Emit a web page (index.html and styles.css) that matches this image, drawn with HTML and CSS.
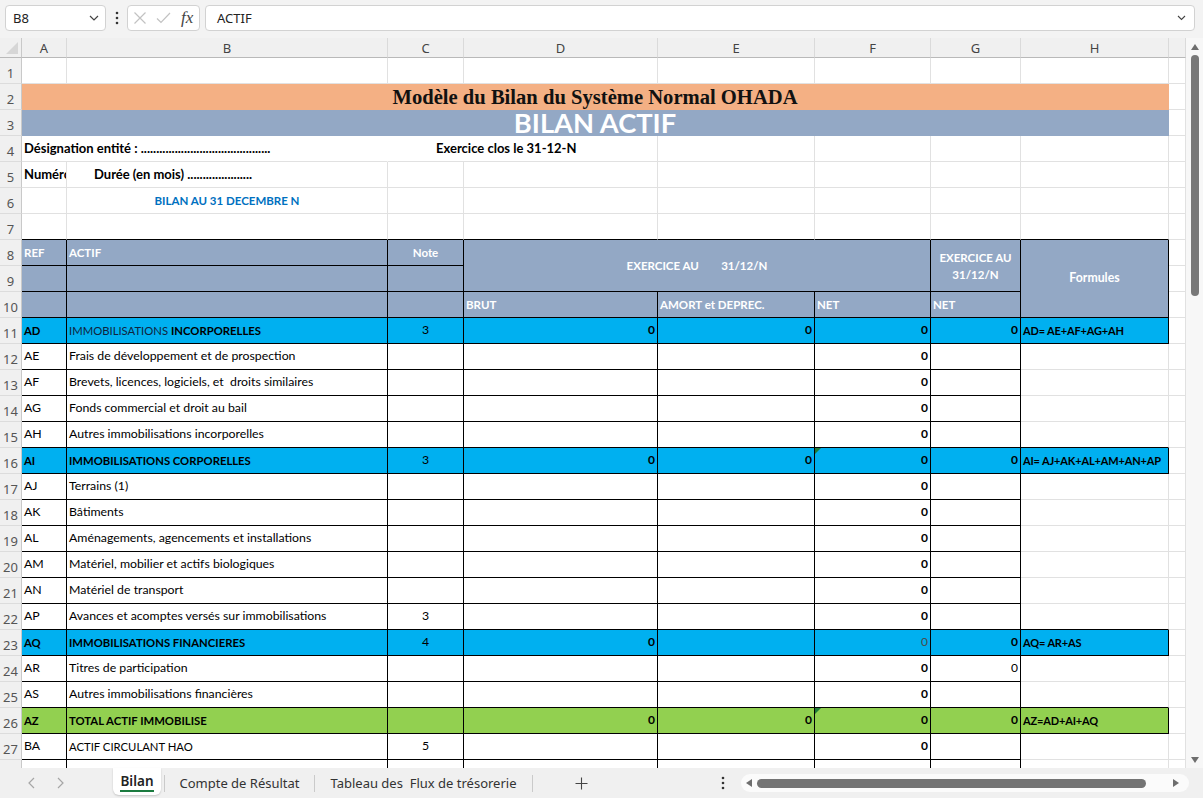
FILE: index.html
```html
<!DOCTYPE html>
<html lang="fr">
<head>
<meta charset="utf-8">
<title>Bilan</title>
<link rel="stylesheet" href="styles.css">
</head>
<body>
<div class="app">
  <div class="topbar">
    <div class="namebox"><span>B8</span><svg width="10" height="6" viewBox="0 0 10 6"><path d="M1 1 L5 5 L9 1" fill="none" stroke="#444" stroke-width="1.2"/></svg></div>
    <div class="vdots"><svg width="4" height="14" viewBox="0 0 4 14"><circle cx="2" cy="2" r="1.3" fill="#333"/><circle cx="2" cy="7" r="1.3" fill="#333"/><circle cx="2" cy="12" r="1.3" fill="#333"/></svg></div>
    <div class="fxbox">
      <svg width="14" height="14" viewBox="0 0 14 14"><path d="M1.5 1.5 L12.5 12.5 M12.5 1.5 L1.5 12.5" stroke="#c2c2c2" stroke-width="1.2" fill="none"/></svg>
      <svg width="15" height="14" viewBox="0 0 15 14"><path d="M1 7.5 L5 11.5 L14 2" stroke="#c2c2c2" stroke-width="1.2" fill="none"/></svg>
      <span class="fx">fx</span>
    </div>
    <div class="formula"><span>ACTIF</span><svg width="9" height="6" viewBox="0 0 9 6"><path d="M1 1 L4.5 4.5 L8 1" fill="none" stroke="#444" stroke-width="1.1"/></svg></div>
  </div>

  <div class="main">
    <div class="sheet">
      <div class="grid">
        <div class="corner"><svg width="22" height="20" viewBox="0 0 22 20"><polygon points="18,4 18,16 6,16" fill="#d6d6d6"/></svg></div>
        <div class="ch">A</div><div class="ch">B</div><div class="ch">C</div><div class="ch">D</div><div class="ch">E</div><div class="ch">F</div><div class="ch">G</div><div class="ch">H</div><div class="ch"></div>

        <div class="rh">1</div>
        <div class="c"></div><div class="c"></div><div class="c"></div><div class="c"></div><div class="c"></div><div class="c"></div><div class="c"></div><div class="c"></div><div class="c"></div>

        <div class="rh">2</div>
        <div class="c title span8">Modèle du Bilan du Système Normal OHADA</div>
        <div class="c"></div>

        <div class="rh">3</div>
        <div class="c big span8">BILAN ACTIF</div>
        <div class="c"></div>

        <div class="rh">4</div>
        <div class="c bo lg span2 nr">Désignation entité : ..........................................</div>
        <div class="c bo lg span2 ex">Exercice clos le 31-12-N</div>
        <div class="c"></div><div class="c"></div><div class="c"></div><div class="c"></div><div class="c"></div>

        <div class="rh">5</div>
        <div class="c bo lg">Numéro</div>
        <div class="c bo lg dur">Durée (en mois) .....................</div>
        <div class="c"></div><div class="c"></div><div class="c"></div><div class="c"></div><div class="c"></div><div class="c"></div><div class="c"></div>

        <div class="rh">6</div>
        <div class="c"></div>
        <div class="c bo m blue">BILAN AU 31 DECEMBRE N</div>
        <div class="c"></div><div class="c"></div><div class="c"></div><div class="c"></div><div class="c"></div><div class="c"></div><div class="c"></div>

        <div class="rh">7</div>
        <div class="c bb"></div><div class="c bb"></div><div class="c bb"></div><div class="c bb"></div><div class="c bb"></div><div class="c bb"></div><div class="c bb"></div><div class="c bb"></div><div class="c"></div>

        <div class="rh">8</div>
        <div class="c hd b">REF</div>
        <div class="c hd b">ACTIF</div>
        <div class="c hd b m">Note</div>
        <div class="c hd b m ex8">EXERCICE AU        31/12/N</div>
        <div class="c hd b m ex9">EXERCICE AU<br>31/12/N</div>
        <div class="c hd b m fo">Formules</div>
        <div class="c"></div>

        <div class="rh">9</div>
        <div class="c hd b"></div><div class="c hd b"></div><div class="c hd b"></div>
        <div class="c"></div>

        <div class="rh">10</div>
        <div class="c hd b"></div><div class="c hd b"></div><div class="c hd b"></div>
        <div class="c hd b">BRUT</div>
        <div class="c hd b">AMORT et DEPREC.</div>
        <div class="c hd b">NET</div>
        <div class="c hd b">NET</div>
        <div class="c"></div>

        <div class="rh">11</div>
        <div class="c b cy bo up">AD</div>
        <div class="c b cy up"><span class="nv">IMMOBILISATIONS&nbsp;</span><b>INCORPORELLES</b></div>
        <div class="c b cy m">3</div>
        <div class="c b cy r bo">0</div>
        <div class="c b cy r bo">0</div>
        <div class="c b cy r bo">0</div>
        <div class="c b cy r bo">0</div>
        <div class="c b cy bo fm">AD= AE+AF+AG+AH</div>
        <div class="c"></div>

        <div class="rh">12</div>
        <div class="c b">AE</div>
        <div class="c b">Frais de développement et de prospection</div>
        <div class="c b"></div><div class="c b"></div><div class="c b"></div>
        <div class="c b r bo">0</div>
        <div class="c b"></div><div class="c"></div><div class="c"></div>

        <div class="rh">13</div>
        <div class="c b">AF</div>
        <div class="c b">Brevets, licences, logiciels, et&nbsp; droits similaires</div>
        <div class="c b"></div><div class="c b"></div><div class="c b"></div>
        <div class="c b r bo">0</div>
        <div class="c b"></div><div class="c"></div><div class="c"></div>

        <div class="rh">14</div>
        <div class="c b">AG</div>
        <div class="c b">Fonds commercial et droit au bail</div>
        <div class="c b"></div><div class="c b"></div><div class="c b"></div>
        <div class="c b r bo">0</div>
        <div class="c b"></div><div class="c"></div><div class="c"></div>

        <div class="rh">15</div>
        <div class="c b">AH</div>
        <div class="c b">Autres immobilisations incorporelles</div>
        <div class="c b"></div><div class="c b"></div><div class="c b"></div>
        <div class="c b r bo">0</div>
        <div class="c b"></div><div class="c bb"></div><div class="c"></div>

        <div class="rh">16</div>
        <div class="c b cy bo up">AI</div>
        <div class="c b cy bo up">IMMOBILISATIONS CORPORELLES</div>
        <div class="c b cy m">3</div>
        <div class="c b cy r bo">0</div>
        <div class="c b cy r bo">0</div>
        <div class="c b cy r bo tri">0</div>
        <div class="c b cy r bo">0</div>
        <div class="c b cy bo fm">AI= AJ+AK+AL+AM+AN+AP</div>
        <div class="c"></div>

        <div class="rh">17</div>
        <div class="c b">AJ</div>
        <div class="c b">Terrains (1)</div>
        <div class="c b"></div><div class="c b"></div><div class="c b"></div>
        <div class="c b r bo">0</div>
        <div class="c b"></div><div class="c"></div><div class="c"></div>

        <div class="rh">18</div>
        <div class="c b">AK</div>
        <div class="c b">Bâtiments</div>
        <div class="c b"></div><div class="c b"></div><div class="c b"></div>
        <div class="c b r bo">0</div>
        <div class="c b"></div><div class="c"></div><div class="c"></div>

        <div class="rh">19</div>
        <div class="c b">AL</div>
        <div class="c b">Aménagements, agencements et installations</div>
        <div class="c b"></div><div class="c b"></div><div class="c b"></div>
        <div class="c b r bo">0</div>
        <div class="c b"></div><div class="c"></div><div class="c"></div>

        <div class="rh">20</div>
        <div class="c b">AM</div>
        <div class="c b">Matériel, mobilier et actifs biologiques</div>
        <div class="c b"></div><div class="c b"></div><div class="c b"></div>
        <div class="c b r bo">0</div>
        <div class="c b"></div><div class="c"></div><div class="c"></div>

        <div class="rh">21</div>
        <div class="c b">AN</div>
        <div class="c b">Matériel de transport</div>
        <div class="c b"></div><div class="c b"></div><div class="c b"></div>
        <div class="c b r bo">0</div>
        <div class="c b"></div><div class="c"></div><div class="c"></div>

        <div class="rh">22</div>
        <div class="c b">AP</div>
        <div class="c b">Avances et acomptes versés sur immobilisations</div>
        <div class="c b m">3</div><div class="c b"></div><div class="c b"></div>
        <div class="c b r bo">0</div>
        <div class="c b"></div><div class="c bb"></div><div class="c"></div>

        <div class="rh">23</div>
        <div class="c b cy bo up">AQ</div>
        <div class="c b cy bo up">IMMOBILISATIONS FINANCIERES</div>
        <div class="c b cy m">4</div>
        <div class="c b cy r bo">0</div>
        <div class="c b cy"></div>
        <div class="c b cy r dim">0</div>
        <div class="c b cy r bo">0</div>
        <div class="c b cy bo fm">AQ= AR+AS</div>
        <div class="c"></div>

        <div class="rh">24</div>
        <div class="c b">AR</div>
        <div class="c b">Titres de participation</div>
        <div class="c b"></div><div class="c b"></div><div class="c b"></div>
        <div class="c b r bo">0</div>
        <div class="c b r">0</div><div class="c"></div><div class="c"></div>

        <div class="rh">25</div>
        <div class="c b">AS</div>
        <div class="c b">Autres immobilisations financières</div>
        <div class="c b"></div><div class="c b"></div><div class="c b"></div>
        <div class="c b r bo">0</div>
        <div class="c b"></div><div class="c bb"></div><div class="c"></div>

        <div class="rh">26</div>
        <div class="c b gr bo up">AZ</div>
        <div class="c b gr bo up">TOTAL ACTIF IMMOBILISE</div>
        <div class="c b gr"></div>
        <div class="c b gr r bo">0</div>
        <div class="c b gr r bo">0</div>
        <div class="c b gr r bo tri">0</div>
        <div class="c b gr r bo">0</div>
        <div class="c b gr bo fm">AZ=AD+AI+AQ</div>
        <div class="c"></div>

        <div class="rh">27</div>
        <div class="c b">BA</div>
        <div class="c b up">ACTIF CIRCULANT HAO</div>
        <div class="c b m">5</div><div class="c b"></div><div class="c b"></div>
        <div class="c b r bo">0</div>
        <div class="c b"></div><div class="c"></div><div class="c"></div>

        <div class="rh">28</div>
        <div class="c b"></div><div class="c b"></div><div class="c b"></div><div class="c b"></div><div class="c b"></div><div class="c b"></div><div class="c b"></div><div class="c"></div><div class="c"></div>
      </div>
    </div>
    <div class="vscroll">
      <div class="varrow"><svg width="8" height="6" viewBox="0 0 8 6"><polygon points="0,6 4,0 8,6" fill="#6e6e6e"/></svg></div>
      <div class="vthumb"></div>
      <div class="vspace"></div>
      <div class="varrow down"><svg width="8" height="6" viewBox="0 0 8 6"><polygon points="0,0 8,0 4,6" fill="#6e6e6e"/></svg></div>
    </div>
  </div>

  <div class="tabbar">
    <div class="nav">
      <svg width="7" height="12" viewBox="0 0 7 12"><path d="M6 1 L1 6 L6 11" fill="none" stroke="#a6a6a6" stroke-width="1.2"/></svg>
      <svg width="7" height="12" viewBox="0 0 7 12"><path d="M1 1 L6 6 L1 11" fill="none" stroke="#a6a6a6" stroke-width="1.2"/></svg>
    </div>
    <div class="tab active"><span>Bilan</span></div>
    <div class="sep"></div>
    <div class="tab t2">Compte de Résultat</div>
    <div class="sep"></div>
    <div class="tab t3">Tableau des&nbsp; Flux de trésorerie</div>
    <div class="sep"></div>
    <div class="plus"><svg width="13" height="13" viewBox="0 0 13 13"><path d="M6.5 0.5 V12.5 M0.5 6.5 H12.5" stroke="#444" stroke-width="1.1"/></svg></div>
    <div class="hdots"><svg width="4" height="14" viewBox="0 0 4 14"><circle cx="2" cy="2" r="1.3" fill="#333"/><circle cx="2" cy="7" r="1.3" fill="#333"/><circle cx="2" cy="12" r="1.3" fill="#333"/></svg></div>
    <div class="hscroll">
      <svg class="harrow" width="6" height="8" viewBox="0 0 6 8"><polygon points="6,0 6,8 0,4" fill="#6e6e6e"/></svg>
      <div class="hthumb"></div>
      <svg class="harrow" width="6" height="8" viewBox="0 0 6 8"><polygon points="0,0 6,4 0,8" fill="#6e6e6e"/></svg>
    </div>
  </div>
</div>
</body>
</html>
```

FILE: styles.css
```css
* { box-sizing: border-box; }
html, body { margin: 0; padding: 0; }
body { width: 1203px; height: 798px; overflow: hidden; font-family: Lato, "Liberation Sans", sans-serif; }

.app { width: 1203px; height: 798px; display: flex; flex-direction: column; background: #f3f3f3; overflow: hidden; }

/* formula bar */
.topbar { height: 38px; flex-shrink: 0; display: flex; align-items: flex-start; padding: 5px 0 0 5px; }
.namebox { width: 101px; height: 26px; background: #fff; border: 1px solid #d2d2d2; border-radius: 4px; display: flex; align-items: center; justify-content: space-between; padding: 0 6px 0 7px; font: 13px "Noto Sans", sans-serif; color: #222; }
.vdots { width: 21px; height: 26px; display: flex; align-items: center; justify-content: center; }
.fxbox { width: 73px; height: 26px; background: #fff; border: 1px solid #d2d2d2; border-radius: 4px; display: flex; align-items: center; padding: 0 0 0 5px; gap: 9px; }
.fx { font: italic 17px "Liberation Serif", serif; color: #444; margin-left: 1px; }
.formula { flex: 1; margin: 0 8px 0 5px; height: 26px; background: #fff; border: 1px solid #d2d2d2; border-radius: 4px; display: flex; align-items: center; justify-content: space-between; padding: 0 8px 0 11px; font: 13px "Noto Sans", sans-serif; color: #222; }

/* sheet */
.main { height: 730px; display: flex; flex-shrink: 0; }
.sheet { width: 1186px; height: 730px; overflow: hidden; background: #fff; }
.grid { display: grid; grid-template-columns: 22px 45px 321px 76px 194px 157px 116px 90px 148px 17px; grid-template-rows: 20px repeat(28, 26px); }

.corner { background: #f0f0f0; border-right: 1px solid #c9c9c9; border-bottom: 1px solid #b9b9b9; }
.ch { background: #f0f0f0; border-right: 1px solid #dadada; border-bottom: 1px solid #b9b9b9; display: flex; align-items: center; justify-content: center; font: 13px "Noto Sans", sans-serif; color: #444; padding-top: 1px; }
.rh { background: #f0f0f0; border-right: 1px solid #c9c9c9; border-bottom: 1px solid #dcdcdc; display: flex; align-items: center; justify-content: center; font: 13px "Noto Sans", sans-serif; color: #555; padding-top: 4px; }

.c { border-right: 1px solid #e1e1e1; border-bottom: 1px solid #e1e1e1; display: flex; align-items: center; padding: 0 2px; white-space: nowrap; overflow: hidden; font-size: 12.3px; line-height: 1.2; color: #000; }
.r { justify-content: flex-end; font-size: 12px; }
.m { justify-content: center; text-align: center; }
.bo, .c b { font-weight: 700; }
.up { font-size: 11.3px; }
.lg { font-size: 13px; }
.fm { font-size: 11px; letter-spacing: -0.15px; }
.b { border-right-color: #000; border-bottom-color: #000; }
.bb { border-bottom-color: #000; }
.nr { border-right-color: transparent; }
.span2 { grid-column: span 2; }
.span8 { grid-column: span 8; }
.ex { padding-left: 48px; }
.dur { padding-left: 27px; }
.blue { color: #0070c0; font-size: 11.5px; }
.nv { color: #10243e; }
.dim { color: #4a4a4a; }

.title { background: #f4b084; border-color: transparent; justify-content: center; font: 700 20.6px/1 "Liberation Serif", serif; color: #111; padding-top: 2px; }
.big { background: #93a8c5; border-color: transparent; justify-content: center; font: 700 27.3px/1 Lato, sans-serif; color: #fff; overflow: visible; padding-top: 1px; }

.hd { background: #93a8c5; color: #fff; font-weight: 700; font-size: 11.5px; }
.ex8 { grid-column: span 3; grid-row: span 2; white-space: pre; }
.ex9 { grid-row: span 2; white-space: normal; line-height: 17px; }
.fo { grid-row: span 3; font-size: 12.3px; }
.cy { background: #00b0f0; }
.gr { background: #92d050; }
.tri { position: relative; }
.tri::before { content: ""; position: absolute; left: 0; top: 0; border-top: 6px solid #1e7a36; border-right: 6px solid transparent; }

/* vertical scrollbar */
.vscroll { width: 17px; height: 730px; background: #f7f7f7; display: flex; flex-direction: column; align-items: center; }
.varrow { height: 17px; width: 17px; display: flex; align-items: center; justify-content: center; flex-shrink: 0; padding-left: 1px; }
.varrow.down { height: 16px; }
.vthumb { width: 8px; height: 241px; background: #787878; border-radius: 4px; margin-left: 1px; flex-shrink: 0; }
.vspace { flex: 1; }

/* tabs */
.tabbar { height: 30px; flex-shrink: 0; display: flex; align-items: flex-start; background: #f0f0f0; font: 13px "Noto Sans", sans-serif; color: #333; }
.nav { width: 113px; height: 30px; display: flex; align-items: center; gap: 22px; padding-left: 28px; }
.tab { height: 27px; display: flex; align-items: center; justify-content: center; white-space: nowrap; }
.tab.active { width: 48px; background: #fff; border-radius: 0 0 6px 6px; box-shadow: 0 1px 2px rgba(0,0,0,0.18); font-weight: 600; font-size: 13.5px; color: #222; }
.tab.active span { border-bottom: 2.5px solid #1b7b3f; padding-bottom: 1px; line-height: 16px; margin-top: 2px; }
.t2 { width: 149px; padding-top: 2px; }
.t3 { width: 217px; padding-top: 2px; }
.sep { width: 1px; height: 17px; background: #cacaca; margin: 7px 0 0 0; }
.tab.active + .sep { margin-left: 3px; }
.plus { width: 96px; height: 30px; display: flex; align-items: center; justify-content: center; }
.hdots { width: 112px; height: 30px; display: flex; align-items: center; justify-content: flex-end; padding-right: 16px; }
.hscroll { width: 448px; height: 18px; margin-top: 6px; background: #fbfbfb; border-radius: 9px; display: flex; align-items: center; padding: 0 10px 0 5px; }
.hthumb { width: 389px; height: 9px; background: #747474; border-radius: 5px; margin: 0 27px 0 5px; }
```
